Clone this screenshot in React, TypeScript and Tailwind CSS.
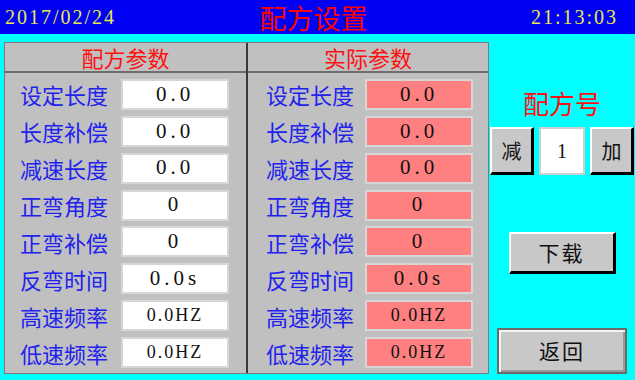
import React from "react";

const ROWS = [
    { label: "设定长度", value: "0.0", small: false },
    { label: "长度补偿", value: "0.0", small: false },
    { label: "减速长度", value: "0.0", small: false },
    { label: "正弯角度", value: "0", small: false },
    { label: "正弯补偿", value: "0", small: false },
    { label: "反弯时间", value: "0.0s", small: false },
    { label: "高速频率", value: "0.0HZ", small: true },
    { label: "低速频率", value: "0.0HZ", small: true },
];

const cjk = "font-['Noto_Sans_CJK_SC',sans-serif]";
const serif = "font-['Liberation_Serif','Noto_Sans_CJK_SC',serif]";

function ParamColumn({ title, actual }: { title: string; actual: boolean }) {
    return (
        <div className="flex flex-col h-full">
            <div className={`h-[30px] flex items-center justify-center border-b-2 border-[#6e6e6e] text-[22px] leading-none text-[#ff1010] ${cjk}`}>
                {title}
            </div>
            <div className="flex-1 flex flex-col pt-[3px] pb-[2px]">
                {ROWS.map(row => (
                    <div key={row.label} className={`flex-1 flex items-center ${actual ? "pl-[18px]" : "pl-[15px]"}`}>
                        <span className={`w-[90px] text-[22px] leading-none text-[#2222ee] ${cjk}`}>{row.label}</span>
                        <div className={`${actual ? "ml-[9px]" : "ml-[11px]"} w-[108px] h-[31px] p-[2px] bg-[#d6d6d6]`}>
                            <div
                                className={`w-full h-full flex items-center justify-center ${actual ? "bg-[#ff8080]" : "bg-white"} text-[#111] ${serif} ${row.small ? "text-[18px] tracking-[2px]" : "text-[21px] tracking-[4px]"}`}
                            >
                                {row.value}
                            </div>
                        </div>
                    </div>
                ))}
            </div>
        </div>
    );
}

function BevelButton({ label, className }: { label: string; className: string }) {
    return (
        <button
            className={`flex items-center justify-center bg-[#c8c8c8] border-t-2 border-l-2 border-white border-b-[3px] border-r-[3px] border-b-black border-r-black text-[#111] ${cjk} ${className}`}
        >
            {label}
        </button>
    );
}

export default function App() {
    return (
        <div className="w-[635px] h-[380px] bg-[#00ffff] flex flex-col overflow-hidden">
            {/* Top bar */}
            <div className="h-[34px] bg-[#0000f4] flex items-center justify-between px-[5px]">
                <span className={`text-[20px] tracking-[2px] text-[#e8e84a] ${serif}`}>2017/02/24</span>
                <span className={`text-[27px] leading-none text-[#ff0000] -ml-[20px] ${cjk}`}>配方设置</span>
                <span className={`text-[20px] tracking-[2px] text-[#e8e84a] mr-[12px] ${serif}`}>21:13:03</span>
            </div>

            <div className="flex-1 flex pt-[8px] pl-[4px] pb-[6px]">
                {/* Parameter table */}
                <div className="w-[485px] h-full border border-[#7a7a7a] bg-[#c0c0c0] grid grid-cols-[243px_1fr]">
                    <div className="border-r-2 border-[#3a3a3a]">
                        <ParamColumn title="配方参数" actual={false} />
                    </div>
                    <ParamColumn title="实际参数" actual={true} />
                </div>

                {/* Right controls */}
                <div className="flex-1 flex flex-col items-center pt-[48px]">
                    <div className={`text-[26px] leading-none text-[#ff1010] ${cjk}`}>配方号</div>
                    <div className="flex items-stretch gap-[5px] mt-[11px] h-[48px]">
                        <BevelButton label="减" className="w-[44px] text-[20px]" />
                        <div className="w-[46px] border-2 border-[#cfcfcf] bg-white flex items-center justify-center">
                            <span className={`text-[20px] text-[#111] ${serif}`}>1</span>
                        </div>
                        <BevelButton label="加" className="w-[44px] text-[20px]" />
                    </div>
                    <BevelButton label="下载" className="w-[107px] h-[42px] mt-[57px] text-[21px] tracking-[2px]" />
                    <div className="flex-1" />
                    <button
                        className={`w-[130px] h-[46px] bg-[#c8c8c8] border-2 border-[#6a6a6a] shadow-[inset_2px_2px_0_#f4f4f4,inset_-2px_-2px_0_#9a9a9a] text-[21px] tracking-[2px] text-[#111] ${cjk}`}
                    >
                        返回
                    </button>
                </div>
            </div>
        </div>
    );
}
